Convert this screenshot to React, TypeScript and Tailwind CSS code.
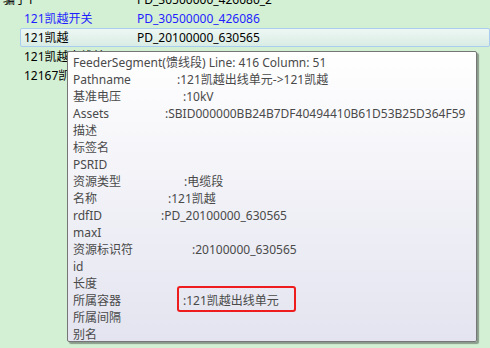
import React from 'react';

interface Row {
  name: string;
  code: string;
  indent: string;
  blue?: boolean;
  selected?: boolean;
}

const rows: Row[] = [
  { name: '骗子1', code: 'PD_30500000_426080_2', indent: 'pl-[3px]' },
  { name: '121凯越开关', code: 'PD_30500000_426086', indent: 'pl-[24px]', blue: true },
  { name: '121凯越', code: 'PD_20100000_630565', indent: 'pl-[24px]', selected: true },
  { name: '121凯越出线单元', code: 'PD_20100000_630566', indent: 'pl-[24px]' },
  { name: '12167凯越', code: 'PD_20100000_630567', indent: 'pl-[24px]' },
  { name: '', code: '', indent: 'pl-[24px]' },
];

// label width puts the value where the original space padding left it
const props: { label: string; value?: string; w?: string; boxed?: boolean }[] = [
  { label: 'Pathname', value: ':121凯越出线单元->121凯越', w: 'w-[104px]' },
  { label: '基准电压', value: ':10kV', w: 'w-[110px]' },
  { label: 'Assets', value: ':SBID000000BB24B7DF40494410B61D53B25D364F59', w: 'w-[92px]' },
  { label: '描述' },
  { label: '标签名' },
  { label: 'PSRID' },
  { label: '资源类型', value: ':电缆段', w: 'w-[111px]' },
  { label: '名称', value: ':121凯越', w: 'w-[95px]' },
  { label: 'rdfID', value: ':PD_20100000_630565', w: 'w-[88px]' },
  { label: 'maxI' },
  { label: '资源标识符', value: ':20100000_630565', w: 'w-[119px]' },
  { label: 'id' },
  { label: '长度' },
  { label: '所属容器', value: ':121凯越出线单元', w: 'w-[110px]', boxed: true },
  { label: '所属间隔' },
  { label: '别名' },
];

export default function App() {
  return (
    <div
      className="relative w-[490px] h-[348px] overflow-hidden bg-[#d3efd4] text-[12px]"
      style={{ fontFamily: '"Noto Sans", "Noto Sans CJK SC", sans-serif' }}
    >
      <div className="-mt-[10px] flex flex-col">
        {rows.map((r, i) => (
          <div key={i} className="h-[19px] flex items-center">
            <div
              className={`flex items-center h-[19px] w-full ${
                r.selected
                  ? 'ml-[20px] border border-[#a9cdef] rounded-[2px] bg-gradient-to-b from-[#eef7f3] to-[#d9ede5]'
                  : ''
              }`}
            >
              <span
                className={`${r.selected ? 'w-[116px] pl-[3px]' : `w-[137px] ${r.indent}`} whitespace-nowrap ${
                  r.blue ? 'text-[#1f1fff]' : 'text-black'
                }`}
              >
                {r.name}
              </span>
              <span className={`whitespace-nowrap ${r.blue ? 'text-[#1f1fff]' : 'text-black'}`}>{r.code}</span>
            </div>
          </div>
        ))}
      </div>

      <div className="absolute left-[67px] top-[51px] w-[410px] h-[291px] rounded-[2px] border border-[#767676] bg-gradient-to-b from-white to-[#e3e4ef] shadow-[2px_2px_1px_rgba(0,0,0,0.35)] pl-[5px] pt-[2px] text-[#4a4a4a] leading-[17px]">
        <div className="whitespace-nowrap">FeederSegment(馈线段) Line: 416 Column: 51</div>
        {props.map((p) => (
          <div key={p.label} className="flex whitespace-nowrap">
            <span className={p.w ?? ''}>{p.label}</span>
            {p.value && (
              <span className="relative">
                {p.value}
                {p.boxed && (
                  <span className="absolute -left-[6px] -top-[6px] w-[119px] h-[26px] border-2 border-[#ee1c1c] rounded-[3px]" />
                )}
              </span>
            )}
          </div>
        ))}
      </div>
    </div>
  );
}
